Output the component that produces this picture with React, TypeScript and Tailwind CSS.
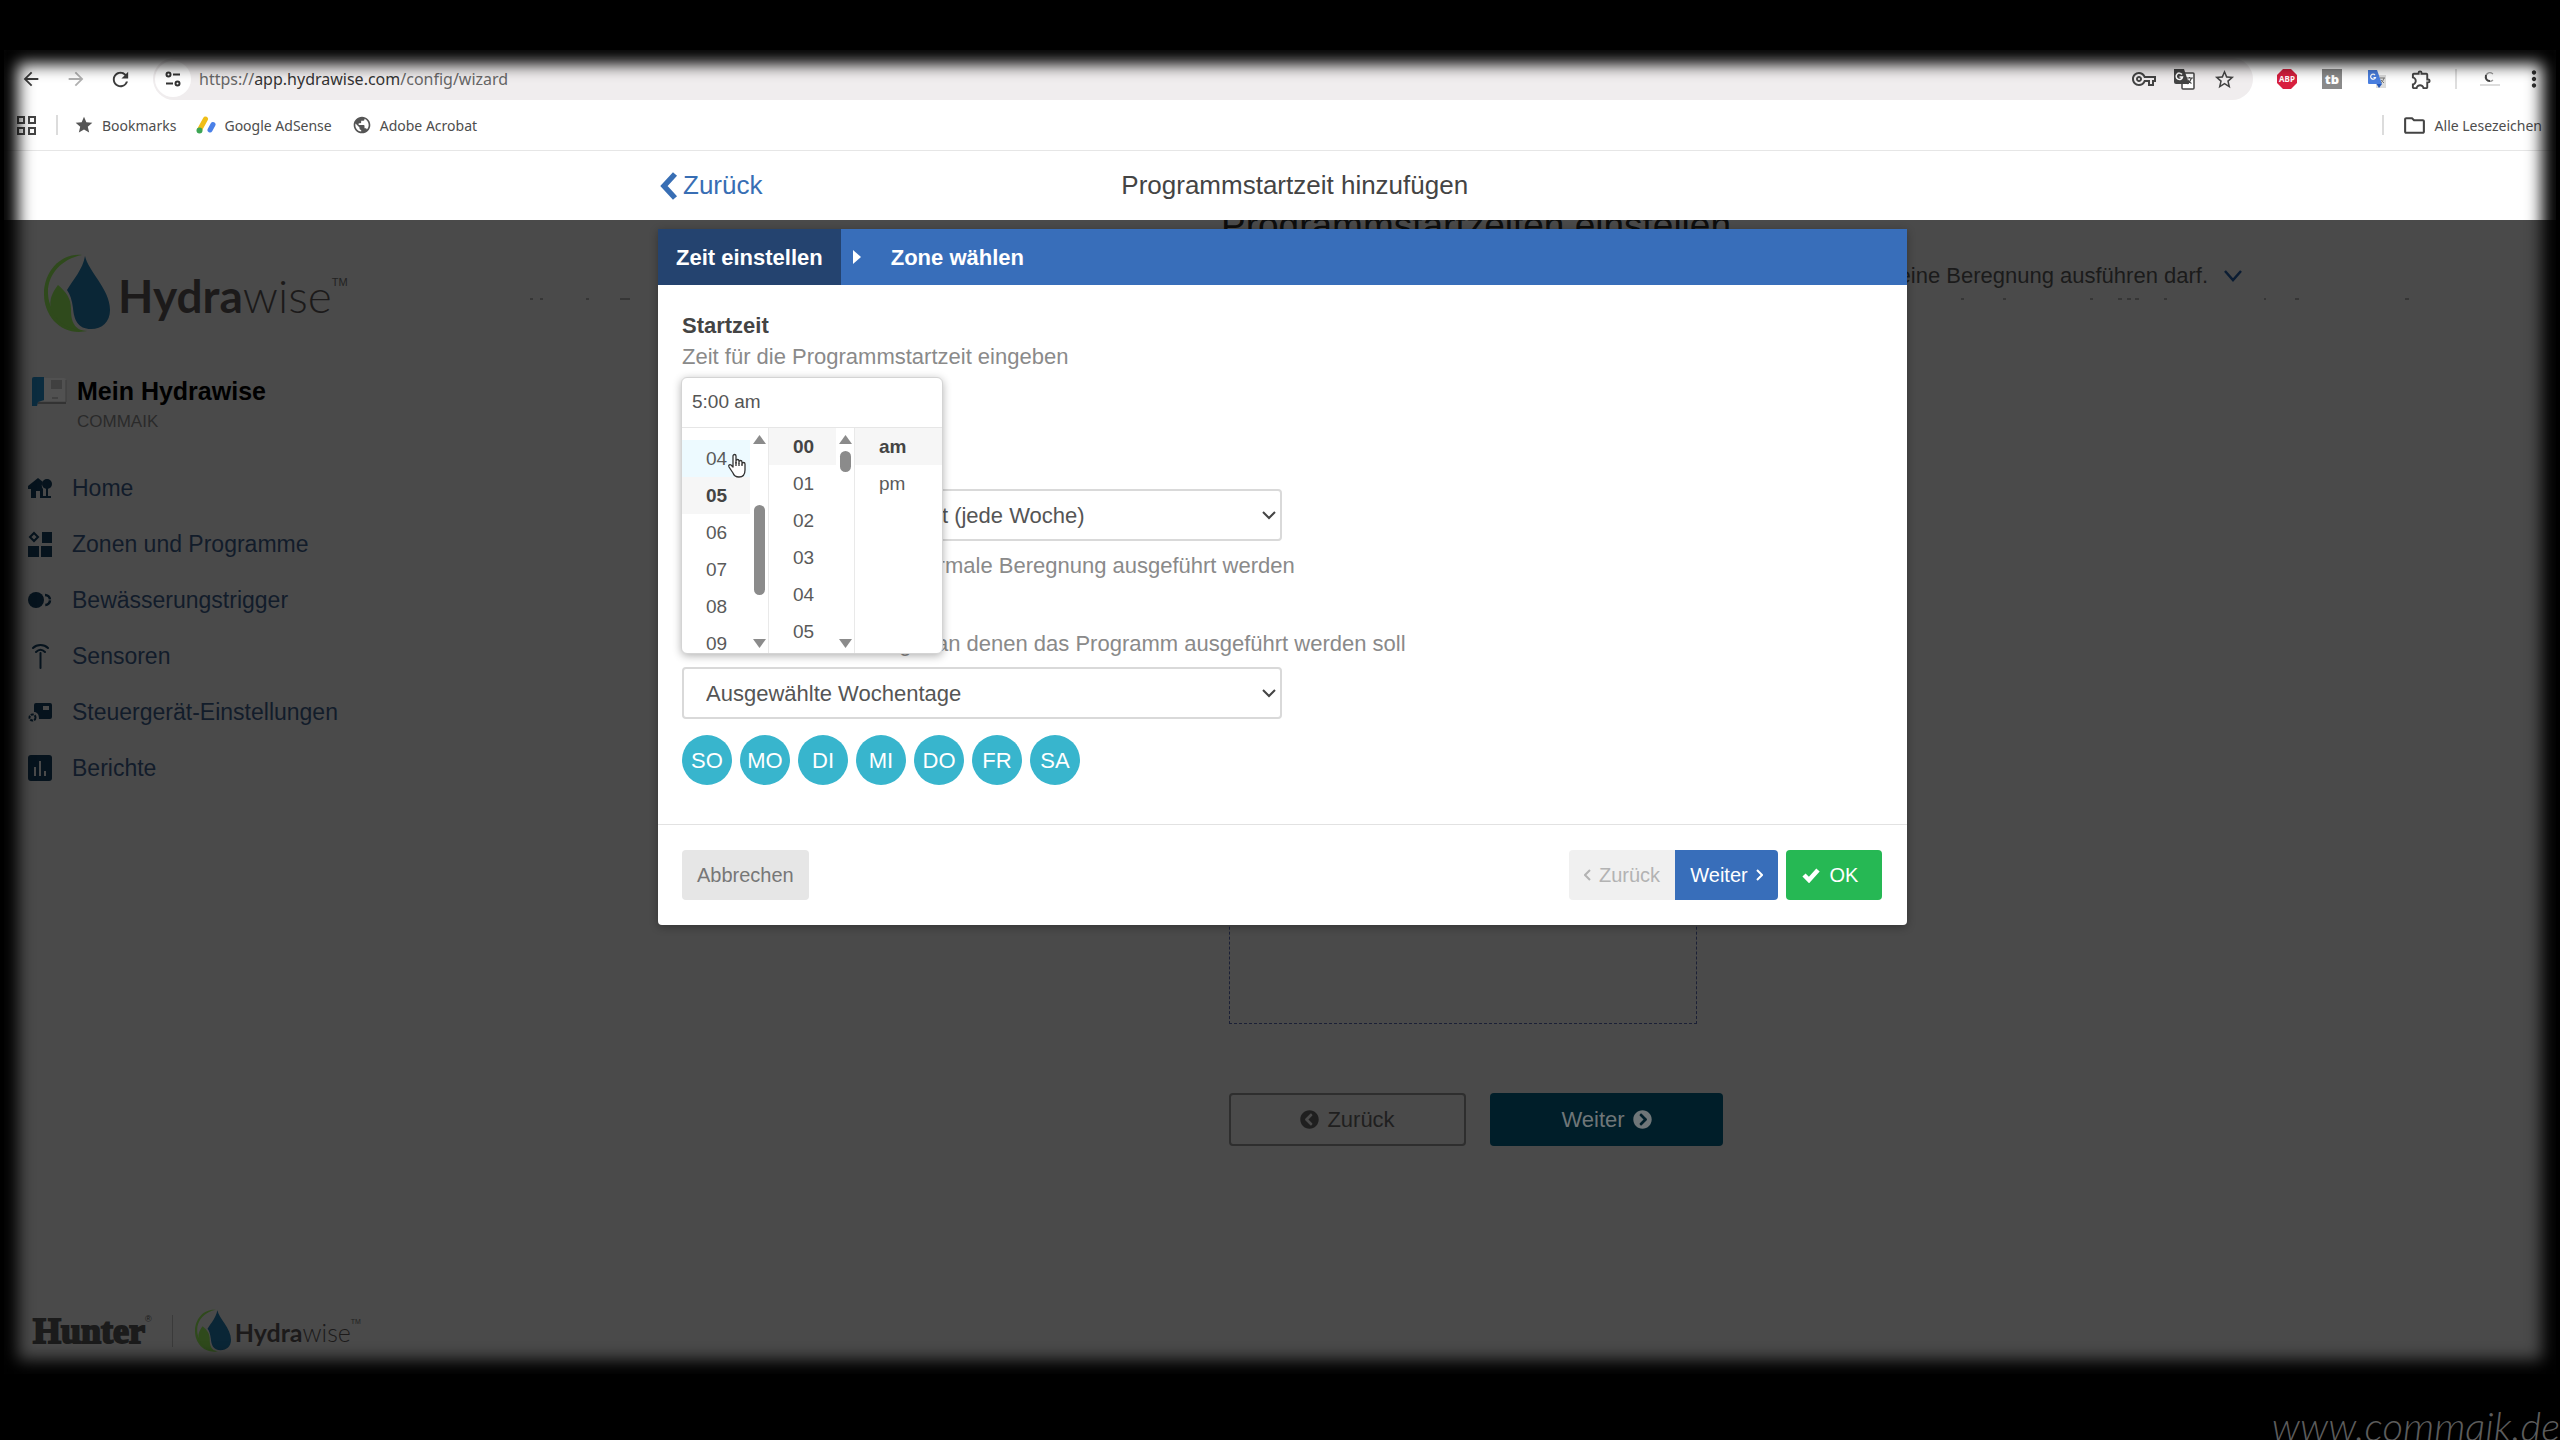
import React, { useState } from 'react';
import {
  MdArrowBack,
  MdArrowForward,
  MdMoreVert,
  MdOutlineExtension,
  MdOutlineFolder,
  MdOutlineVpnKey,
  MdPublic,
  MdRefresh,
  MdStar,
  MdStarBorder,
} from 'react-icons/md';
import { FaChevronCircleLeft, FaChevronCircleRight } from 'react-icons/fa';

/* ---------- logos ---------- */

const DropMark: React.FC<{ className: string }> = ({ className }) => (
  <svg viewBox="0 0 66 78" className={className} aria-hidden="true">
    <path d="M38 1C17-1 0 17 0 40c0 21 15 38 35 38 3 0 6-1 8-1C25 75 5 62 4 40 3 21 17 5 38 1Z" fill="#2f4a1c" />
    <path d="M14 31C8 39 5 46 7 54c3 11 15 21 29 22-8-5-9-12-9-21 0-11-5-17-13-24Z" fill="#2f4a1c" />
    <path d="M41 2c3 15 25 33 25 54 0 12-8 19-19 19-13 0-17-9-18-21-1-8-3-14-6-18C29 26 39 15 41 2Z" fill="#0a2636" />
  </svg>
);

const ControllerIcon = () => (
  <svg viewBox="0 0 36 30" className="w-9 h-[30px]" aria-hidden="true">
    <path d="M13 2h20a2 2 0 0 1 2 2v21H13Z" fill="#515151" />
    <path d="M1 3a2 2 0 0 1 2-2h10v23l-6 2-1 4H1Z" fill="#0b2c3f" />
    <path d="M7 26h28v2H7Z" fill="#333" />
    <path d="M20 4h11v9H20Z" fill="#404040" />
    <path d="M21 22h6" stroke="#333" />
    <path d="M35 4v22" stroke="#3c3c3c" />
  </svg>
);

/* ---------- sidebar icons ---------- */

const HomeIcon = () => (
  <svg viewBox="0 0 24 26" className="w-6 h-[26px]" fill="currentColor">
    <path d="M0 11 10 3l5 4a6 6 0 0 0 0 7v9H3v-9H0Z" />
    <circle cx="19" cy="9" r="5" />
    <path d="M18 12h2v9h3v2h-8v-2h3Z" />
    <path d="M8 16h4v7H8Z" fill="#4a4a4a" />
  </svg>
);

const ZonesIcon = () => (
  <svg viewBox="0 0 24 26" className="w-6 h-[26px]" fill="currentColor">
    <path d="M6 2 10 6 6 10 2 6Z" fill="none" stroke="currentColor" strokeWidth="2" />
    <rect x="14" y="1" width="10" height="11" />
    <rect x="0" y="15" width="11" height="11" />
    <rect x="13" y="15" width="11" height="11" />
  </svg>
);

const TriggerIcon = () => (
  <svg viewBox="0 0 24 26" className="w-6 h-[26px]">
    <circle cx="8" cy="13" r="8" fill="currentColor" />
    <path d="M17 8a5 5 0 1 1 0 10" fill="none" stroke="currentColor" strokeWidth="2.500" strokeDasharray="7 1" />
  </svg>
);

const SensorIcon = () => (
  <svg viewBox="0 0 24 26" className="w-6 h-[26px]" fill="none" stroke="currentColor" strokeWidth="2" strokeLinecap="round">
    <path d="M5 5c4-4 11-4 15 0M8 9c3-3 6-3 9 0M12.500 10v15" />
  </svg>
);

const SettingsIcon = () => (
  <svg viewBox="0 0 24 26" className="w-6 h-[26px]" fill="currentColor">
    <path d="M6 6a2 2 0 0 1 2-2h14a2 2 0 0 1 2 2v12a2 2 0 0 1-2 2H11c0-5-2-7-5-7Z" />
    <rect x="15" y="7" width="6" height="4" fill="#4a4a4a" />
    <circle cx="4.500" cy="18.500" r="3" fill="none" stroke="currentColor" strokeWidth="2" strokeDasharray="3 1" />
  </svg>
);

const ReportsIcon = () => (
  <svg viewBox="0 0 24 26" className="w-6 h-[26px]">
    <rect width="24" height="26" rx="3" fill="currentColor" />
    <path d="M7 12v9M12 6v15M17 16v5" stroke="#4a4a4a" strokeWidth="2" />
  </svg>
);

/* ---------- browser icons ---------- */

const SiteInfoIcon = () => (
  <svg viewBox="0 0 16 16" className="size-4" fill="none" stroke="#333" strokeWidth="2">
    <circle cx="3.500" cy="3.500" r="2" />
    <path d="M8 3.500h7M1 12.500h7" />
    <circle cx="12.500" cy="12.500" r="2" />
  </svg>
);

const TranslateIcon = () => (
  <svg viewBox="0 0 22 22" className="size-[22px]">
    <rect x="9" y="5" width="12" height="16" rx="1" fill="#fff" stroke="#444" strokeWidth="1.500" />
    <path d="M1 1h10l5 15H3a2 2 0 0 1-2-2Z" fill="#444" />
    <path d="M9 6.500A3.200 3.200 0 1 0 9.500 9H6.500" fill="none" stroke="#fff" strokeWidth="1.500" />
    <path d="M13 10h7M16.500 9v1M18.500 10c-1 3-2 4-4 6M14.500 11.500c1 2 2 3 4 4" fill="none" stroke="#444" strokeWidth="1.200" />
  </svg>
);

const AbpIcon = () => (
  <svg viewBox="0 0 22 22" className="size-[22px]">
    <path d="M7 1h8l6 6v8l-6 6H7l-6-6V7Z" fill="#d8203f" />
    <text x="11" y="14" textAnchor="middle" fontSize="8" fontWeight="700" fill="#fff">ABP</text>
  </svg>
);

const BuddyIcon = () => (
  <svg viewBox="0 0 20 20" className="size-5">
    <rect width="20" height="20" fill="#8a8a8a" />
    <text x="10" y="15" textAnchor="middle" fontSize="13" fontWeight="900" fill="#fff">tb</text>
  </svg>
);

const GoogleTranslateIcon = () => (
  <svg viewBox="0 0 20 20" className="size-5">
    <rect x="9" y="6" width="10" height="13" fill="#dcdcdc" />
    <path d="M1 1h9l5 14H2a1 1 0 0 1-1-1Z" fill="#4a7fe0" />
    <path d="M9.500 15H15l-3 4Z" fill="#2558b8" />
    <path d="M8 6A2.500 2.500 0 1 0 8.500 8.500H6.500" fill="none" stroke="#fff" strokeWidth="1.200" />
    <path d="M13 9h5M17 9c-1 3-2 4-3 5M14 11l3 3" fill="none" stroke="#777" />
  </svg>
);

const AdSenseIcon = () => (
  <svg viewBox="0 0 20 18" className="w-5 h-[18px]" strokeLinecap="round" fill="none">
    <path d="M9.500 3 4 13" stroke="#efbe18" strokeWidth="5" />
    <circle cx="3.500" cy="14.500" r="3" fill="#3da554" />
    <path d="M17 8.500 14 14" stroke="#4a80e8" strokeWidth="5" />
  </svg>
);

const AppsIcon = () => (
  <svg viewBox="0 0 19 19" className="size-[19px]" fill="none" stroke="#444" strokeWidth="2">
    <path d="M1 1h6v6H1ZM12 1h6v6h-6ZM1 12h6v6H1ZM12 12h6v6h-6Z" />
  </svg>
);

const ProfileIcon = () => (
  <svg viewBox="0 0 22 18" className="w-[22px] h-[18px]" fill="none">
    <path d="M14 4c-4-3-8 0-7 4s5 4 7 2" stroke="#999" strokeWidth="1.200" />
    <path d="M7 5c-1 4 1 6 4 6" stroke="#444" strokeWidth="2" />
    <path d="M1 15h20" stroke="#bbb" />
  </svg>
);

const Caret: React.FC<{ className: string; flip?: boolean }> = ({ className, flip }) => (
  <svg viewBox="0 0 13 9" className={className} fill="#8b8b8b">
    <path d={flip ? 'M0 0h13L6.500 9Z' : 'M0 9h13L6.500 0Z'} />
  </svg>
);

const HandCursor = () => (
  <svg viewBox="0 0 20 25" className="absolute left-[45px] top-[75px] w-5 h-[25px]" fill="#fff" stroke="#333" strokeWidth="1.300" strokeLinejoin="round">
    <path d="M6 14V3c0-2 3-2 3 0v7-2c0-2 3-2 3 0v2-1c0-2 3-2 3 0v2c0-2 3-2 3 0v6c0 4-2 7-6 7-3 0-5-1-6-4l-4-6c-1-2 1-3 2-2Z" />
    <path d="M9 9v4M12 10v3M15 11v2" />
  </svg>
);

/* ---------- browser chrome ---------- */

const BrowserBar = () => (
  <div className="bg-white border-b border-[#e6e6e6] pb-2 font-['Noto_Sans','Open_Sans',sans-serif] text-[#4d4d4d]">
    <div className="flex items-center h-[58px] pl-1">
      <button aria-label="Zurück" className="w-[45px] flex justify-center text-[#3c3c3c]"><MdArrowBack size={22} /></button>
      <button aria-label="Vor" className="w-[45px] flex justify-center text-[#b0b0b0]"><MdArrowForward size={22} /></button>
      <button aria-label="Neu laden" className="w-[45px] flex justify-center text-[#3c3c3c]"><MdRefresh size={23} /></button>
      <div className="flex-1 flex items-center h-[42px] ml-2.5 pl-0.5 pr-[9px] rounded-full bg-[#f0edee]">
        <button aria-label="Websiteinformationen" className="size-9 rounded-full bg-white flex items-center justify-center">
          <SiteInfoIcon />
        </button>
        <span className="flex-1 ml-2 text-[16px] text-[#666]">
          https://<span className="text-[#333]">app.hydrawise.com</span>/config/wizard
        </span>
        <button aria-label="Passwörter" className="w-10 flex justify-center text-[#444]"><MdOutlineVpnKey size={24} /></button>
        <button aria-label="Übersetzen" className="w-10 flex justify-center"><TranslateIcon /></button>
        <button aria-label="Lesezeichen" className="w-10 flex justify-center text-[#444]"><MdStarBorder size={23} /></button>
      </div>
      <div className="flex items-center ml-[11px]">
        <button aria-label="Adblock" className="w-[45px] flex justify-center"><AbpIcon /></button>
        <button aria-label="Buddy" className="w-[45px] flex justify-center"><BuddyIcon /></button>
        <button aria-label="Translate" className="w-[45px] flex justify-center"><GoogleTranslateIcon /></button>
        <button aria-label="Erweiterungen" className="w-[45px] flex justify-center text-[#444]"><MdOutlineExtension size={23} /></button>
        <span className="ml-[11px] mr-2.5 w-0.5 h-5 bg-[#dedede]" />
        <button aria-label="Profil" className="w-[45px] flex justify-center"><ProfileIcon /></button>
        <button aria-label="Menü" className="w-11 flex justify-center text-[#333]"><MdMoreVert size={26} /></button>
      </div>
    </div>
    <div className="flex items-center h-[34px] pl-[13px] pr-3.5 text-[14px]">
      <AppsIcon />
      <span className="ml-5 w-0.5 h-5 bg-[#dcdcdc]" />
      <a href="#" className="flex items-center gap-2 ml-4"><MdStar size={20} className="text-[#555]" />Bookmarks</a>
      <a href="#" className="flex items-center gap-2 ml-5"><AdSenseIcon />Google AdSense</a>
      <a href="#" className="flex items-center gap-2 ml-5"><MdPublic size={20} className="text-[#555]" />Adobe Acrobat</a>
      <span className="ml-auto w-0.5 h-5 bg-[#dcdcdc]" />
      <a href="#" className="flex items-center gap-2 ml-[18px]"><MdOutlineFolder size={25} className="text-[#444]" />Alle Lesezeichen</a>
    </div>
  </div>
);

/* ---------- sidebar ---------- */

const navItems = [
  { label: 'Home', Icon: HomeIcon },
  { label: 'Zonen und Programme', Icon: ZonesIcon },
  { label: 'Bewässerungstrigger', Icon: TriggerIcon },
  { label: 'Sensoren', Icon: SensorIcon },
  { label: 'Steuergerät-Einstellungen', Icon: SettingsIcon },
  { label: 'Berichte', Icon: ReportsIcon },
];

const Sidebar = () => (
  <aside className="w-[392px] shrink-0 flex flex-col pt-[34px] pb-[22px]">
    <div className="flex items-center pl-10 h-[78px]">
      <DropMark className="w-[66px] h-[78px]" />
      <span className="ml-2 pt-1.5 font-['Lato',sans-serif] text-[46px] leading-[60px] text-[#1c1a1a]">
        <b>Hydra</b><span className="font-light">wise</span>
      </span>
      <span className="self-start mt-5 text-[11px] text-[#222]">TM</span>
    </div>

    <div className="flex pl-[27px] mt-[44px]">
      <ControllerIcon />
      <div className="ml-2.5">
        <h1 className="text-[25px] leading-[30px] font-bold text-black">Mein Hydrawise</h1>
        <p className="text-[17px] leading-8 text-[#2a2a2a]">COMMAIK</p>
      </div>
    </div>

    <nav className="mt-[22px]">
      {navItems.map(({ label, Icon }) => (
        <a key={label} href="#" className="flex items-center gap-5 h-14 pl-6 text-[23px] text-[#121c2a]">
          <span className="text-[#06131d]"><Icon /></span>
          <span>{label}</span>
        </a>
      ))}
    </nav>

    <div className="mt-auto flex items-center pl-[29px]">
      <span className="font-['Liberation_Serif',serif] font-bold text-[36px] leading-10 text-[#1b1b1b] [-webkit-text-stroke:2px_#1b1b1b]">Hunter</span>
      <span className="self-start mt-1 text-[9px] text-[#1b1b1b]">®</span>
      <span className="ml-5 w-px h-8 bg-[#3a3a3a]" />
      <DropMark className="ml-[22px] w-9 h-[43px]" />
      <span className="ml-1 pt-1 font-['Lato',sans-serif] text-[25px] text-[#1c1a1a]">
        <b>Hydra</b><span className="font-light">wise</span>
      </span>
      <span className="self-start mt-2 text-[7px] text-[#222]">TM</span>
    </div>
  </aside>
);

/* ---------- page under the dialog ---------- */

const WizardPage = () => (
  <section className="flex-1 flex flex-col">
    <h2 className="-mt-[14px] text-[37px] leading-10 text-center text-[#0d0d0d]">Programmstartzeiten einstellen</h2>
    <p className="flex items-center justify-end gap-4 mt-[15px] pr-[314px] text-[22px] leading-[30px] text-[#1b1b1b]">
      keine Beregnung ausführen darf.
      <svg viewBox="0 0 18 12" className="w-[18px] h-3" fill="none" stroke="#0b1d33" strokeWidth="2.500">
        <path d="m1 1 8 9 8-9" />
      </svg>
    </p>
    {/* tips of the collapsed help text */}
    <svg viewBox="0 0 2160 4" className="mt-1.5 w-full h-1" fill="none" stroke="#363636" strokeWidth="2">
      <path d="M134 2h3M144 2h3M190 2h3M224 2h10" />
      <path d="M1565 2h3M1607 2h3M1694 2h3M1722 2h4M1731 2h4M1739 2h4M1768 2h3M1868 2h2M1899 2h4M2009 2h4" />
    </svg>
    <div className="w-[494px] mx-auto mt-[462px]">
      <div className="w-[468px] h-[261px] border border-dashed border-[#1b2036]" />
      <div className="flex gap-6 mt-[69px] text-[22px]">
        <button className="flex-1 h-[53px] flex items-center justify-center gap-2 rounded border-2 border-[#2e2e2e] text-[#1f1f1f]">
          <FaChevronCircleLeft size={19} /> Zurück
        </button>
        <button className="flex-1 h-[53px] flex items-center justify-center gap-2 rounded bg-[#001e29] text-[#6f7678]">
          Weiter <FaChevronCircleRight size={19} />
        </button>
      </div>
    </div>
  </section>
);

/* ---------- time picker ---------- */

const hours = ['04', '05', '06', '07', '08', '09'];
const minutes = ['00', '01', '02', '03', '04', '05'];

const ScrollTrack: React.FC<{ thumb: string }> = ({ thumb }) => (
  <div className="w-[18px] flex flex-col items-center pt-[7px] pb-[5px]">
    <Caret className="w-[13px] h-[9px]" />
    <span className={`w-[11px] rounded-full bg-[#8b8b8b] ${thumb}`} />
    <Caret className="w-[13px] h-[9px] mt-auto" flip />
  </div>
);

const TimePicker = () => {
  const [value, setValue] = useState('5:00 am');

  return (
    <div className="absolute z-10 top-0 -left-px w-[262px] bg-white rounded-md border border-[#d4d4d4] shadow-[0_2px_8px_rgba(0,0,0,0.3)] text-[19px] text-[#5a5a5a] overflow-hidden">
      <input
        id="startzeit"
        value={value}
        onChange={(e) => setValue(e.target.value)}
        className="block w-full h-[50px] px-2.5 pb-0.5 border-b border-[#e6e6e6] outline-none text-[#555]"
      />
      <div className="flex h-[225px]">
        <div className="w-[87px] flex border-r border-[#e9e9e9] overflow-hidden">
          <div className="flex-1 pt-3">
            {hours.map((h) => (
              <button
                key={h}
                className={`block w-full h-[37px] pl-6 text-left ${h === '04' ? 'bg-[#edfaff]' : ''} ${h === '05' ? 'bg-[#f6f6f6] font-bold text-[#444]' : ''}`}
              >
                {h}
              </button>
            ))}
          </div>
          <ScrollTrack thumb="mt-[61px] h-[90px]" />
        </div>
        <div className="w-[86px] flex border-r border-[#e9e9e9] overflow-hidden">
          <div className="flex-1">
            {minutes.map((m) => (
              <button
                key={m}
                className={`block w-full h-[37px] pl-6 text-left ${m === '00' ? 'bg-[#f6f6f6] font-bold text-[#444]' : ''}`}
              >
                {m}
              </button>
            ))}
          </div>
          <ScrollTrack thumb="mt-[7px] h-[21px]" />
        </div>
        <div className="flex-1">
          <button className="block w-full h-[37px] pl-6 text-left bg-[#f6f6f6] font-bold text-[#444]">am</button>
          <button className="block w-full h-[37px] pl-6 text-left">pm</button>
        </div>
      </div>
      <HandCursor />
    </div>
  );
};

/* ---------- dialog ---------- */

const SelectBox: React.FC<{ label: string; value: string }> = ({ label, value }) => (
  <div className="relative w-[600px]">
    <select aria-label={label} className="appearance-none w-full h-[52px] pl-[22px] pr-10 rounded border-2 border-[#d9d9d9] bg-white text-[22px] text-[#555]">
      <option>{value}</option>
    </select>
    <svg viewBox="0 0 14 9" className="absolute right-1.5 top-[22px] w-3.5 h-[9px] pointer-events-none" fill="none" stroke="#444" strokeWidth="2">
      <path d="m1 1 6 6 6-6" />
    </svg>
  </div>
);

const days = ['SO', 'MO', 'DI', 'MI', 'DO', 'FR', 'SA'];

const StartTimeDialog = () => {
  const [selected, setSelected] = useState<string[]>(days);

  const toggle = (day: string) =>
    setSelected((prev) => (prev.includes(day) ? prev.filter((d) => d !== day) : [...prev, day]));

  return (
    <div role="dialog" aria-label="Programmstartzeit hinzufügen" className="w-[1249px] bg-white rounded-b shadow-[0_2px_8px_rgba(0,0,0,0.3)]">
      <div className="flex items-center h-14 bg-[#386eba] text-white text-[22px] font-bold">
        <button className="h-full px-[18px] bg-[#24436f]">Zeit einstellen</button>
        <svg viewBox="0 0 8 14" className="ml-3 w-2 h-3.5" fill="#fff">
          <path d="M0 0 8 7 0 14Z" />
        </svg>
        <button className="h-full ml-[30px]">Zone wählen</button>
      </div>

      <div className="px-6 pt-[25px] pb-[39px] text-[22px] leading-[31px] text-[#8a8a8a]">
        <label htmlFor="startzeit" className="block font-bold text-[#444]">Startzeit</label>
        <p>Zeit für die Programmstartzeit eingeben</p>
        <div className="relative mt-[5px] h-[50px]">
          <TimePicker />
        </div>
        <div className="mt-[62px]">
          <SelectBox label="Programmtyp" value="Normaler Programmstart (jede Woche)" />
          <p className="mt-[9px]">Wählen Sie, wann eine normale Beregnung ausgeführt werden</p>
        </div>
        <div className="mt-[47px]">
          <p className="mb-2">Wählen Sie Wochentage, an denen das Programm ausgeführt werden soll</p>
          <SelectBox label="Wochentage" value="Ausgewählte Wochentage" />
        </div>
        <div className="flex gap-2 mt-4">
          {days.map((day) => (
            <button
              key={day}
              onClick={() => toggle(day)}
              className={`size-[50px] rounded-full text-white ${selected.includes(day) ? 'bg-[#38b5cd]' : 'bg-[#bbb]'}`}
            >
              {day}
            </button>
          ))}
        </div>
      </div>

      <footer className="flex pl-6 pr-[25px] py-[25px] border-t border-[#e2e2e2] text-[20px]">
        <button className="h-[50px] px-[15px] rounded bg-[#e6e6e6] text-[#777]">Abbrechen</button>
        <button disabled className="ml-auto h-[50px] w-[106px] flex items-center justify-center gap-2 rounded-l bg-[#f0f0f0] text-[#b3b3b3]">
          <svg viewBox="0 0 7 12" className="w-[7px] h-3" fill="none" stroke="currentColor" strokeWidth="2"><path d="M6 1 1 6l5 5" /></svg>
          Zurück
        </button>
        <button className="h-[50px] w-[103px] flex items-center justify-center gap-2 rounded-r bg-[#386eba] text-white">
          Weiter
          <svg viewBox="0 0 7 12" className="w-[7px] h-3" fill="none" stroke="currentColor" strokeWidth="2"><path d="m1 1 5 5-5 5" /></svg>
        </button>
        <button className="ml-2 h-[50px] w-24 pr-2 flex items-center justify-center gap-2.5 rounded bg-[#26b854] text-white">
          <svg viewBox="0 0 18 15" className="w-[18px] h-[15px]" fill="none" stroke="currentColor" strokeWidth="4.500"><path d="m2 7 5 5 9-10" /></svg>
          OK
        </button>
      </footer>
    </div>
  );
};

export default function App() {
  return (
    <div className="relative min-h-screen flex flex-col overflow-hidden bg-black px-1 pt-[50px] pb-[66px] font-['Liberation_Sans',Arial,sans-serif]">
      <div className="relative flex-1 flex flex-col">
        <BrowserBar />

        <header className="flex justify-center bg-white pl-[5px]">
          <div className="w-[1249px] h-[69px] flex items-center pl-0.5 text-[26px]">
            <a href="#" className="flex items-center gap-[5px] text-[#386eb4]">
              <svg viewBox="0 0 18 28" className="w-[18px] h-7" fill="none" stroke="currentColor" strokeWidth="5.500">
                <path d="M15 2 4 14l11 12" />
              </svg>
              Zurück
            </a>
            <h1 className="flex-1 pr-20 text-center text-[#444]">Programmstartzeit hinzufügen</h1>
          </div>
        </header>

        <main className="relative flex-1 flex bg-[#4a4a4a] overflow-hidden">
          <Sidebar />
          <WizardPage />
          <div className="absolute inset-x-0 top-[9px] pl-[5px] flex justify-center">
            <StartTimeDialog />
          </div>
        </main>

        {/* soft black edge around the whole recording */}
        <div className="absolute z-20 inset-0 pointer-events-none shadow-[inset_0_0_16px_14px_#000]" />
      </div>

      <span className="absolute right-0 -bottom-2 font-['Lato',sans-serif] font-light italic text-[40px] leading-[44px] text-[#5c5c5c]">www.commaik.de</span>
    </div>
  );
}
